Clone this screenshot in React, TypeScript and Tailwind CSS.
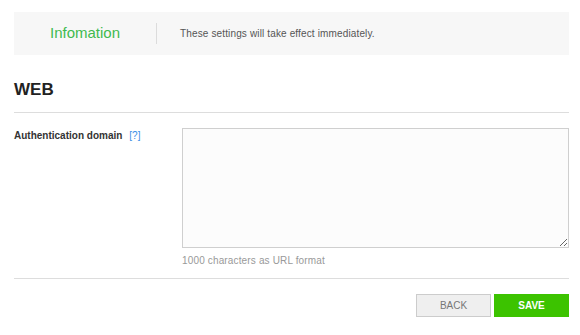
export default function App() {
  return (
    <div className="w-[580px] h-[335px] bg-white pl-[14px] pr-[11px] pt-[12px] font-['Liberation_Sans',Arial,sans-serif]">
      {/* info banner */}
      <div className="flex h-[43px] items-center bg-[#f7f7f7]">
        <div className="w-[142px] pl-[36px] text-[15px] text-[#3fba4f]">Infomation</div>
        <div className="h-[21px] w-px bg-[#dcdcdc]" />
        <div className="pl-[23px] text-[10px] tracking-[0.14px] text-[#555]">These settings will take effect immediately.</div>
      </div>

      <h2 className="mt-[25px] text-[17px] font-bold leading-[20px] text-[#222]">WEB</h2>
      <div className="mt-[12px] h-px bg-[#dddddd]" />

      <div className="mt-[15px] flex">
        <div className="flex w-[168px] gap-[7px] pt-[2px] text-[10px] leading-[12px]">
          <span className="font-bold text-[#333]">Authentication domain</span>
          <span className="text-[#3a8ee6]">[?]</span>
        </div>
        <div className="flex-1">
          <textarea className="block h-[120px] w-full resize-y border border-[#cfcfcf] bg-[#fcfcfc] outline-none" />
          <div className="mt-[7px] text-[10px] leading-[12px] tracking-[0.15px] text-[#999]">1000 characters as URL format</div>
        </div>
      </div>

      <div className="mt-[11px] h-px bg-[#dddddd]" />

      <div className="mt-[15px] flex justify-end gap-[3px]">
        <button className="h-[23px] w-[75px] border border-[#cccccc] bg-[#efefef] text-[10px] text-[#777]">BACK</button>
        <button className="h-[23px] w-[75px] bg-[#3cc300] text-[10px] font-bold text-white">SAVE</button>
      </div>
    </div>
  );
}
